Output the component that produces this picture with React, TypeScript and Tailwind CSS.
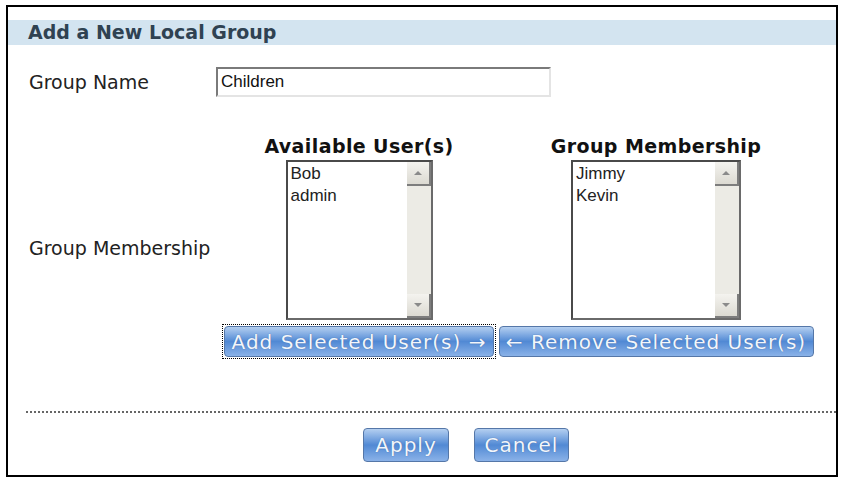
import { ReactNode } from 'react'

const verdana = { fontFamily: '"DejaVu Sans", Verdana, sans-serif' }

function BlueButton({ children, className = '', focused = false }: { children: ReactNode; className?: string; focused?: boolean }) {
  return (
    <div className={focused ? 'border border-dotted border-black p-px' : 'p-[2px]'}>
      <button
        className={`flex items-center justify-center whitespace-nowrap rounded-[4px] border border-[#5577a8] bg-gradient-to-b from-[#b4cff0] via-[#5189d4] to-[#8ab2e8] text-[20px] leading-none tracking-[1px] text-[#f2f6fc] [text-shadow:0_0_1px_#3a5f98] font-['DejaVu_Sans',sans-serif] ${className}`}
      >
        {children}
      </button>
    </div>
  )
}

function ScrollArrow({ down = false }: { down?: boolean }) {
  return (
    <div className="flex h-[24px] w-[24px] items-center justify-center border-r-2 border-b-2 border-[#7d7d7d] bg-gradient-to-b from-[#f4f3ef] to-[#dcdad2]">
      <svg width="10" height="6" viewBox="0 0 10 6">
        {down ? <path d="M1 1 L9 1 L5 5 Z" fill="#8a8a8a" /> : <path d="M1 5 L9 5 L5 1 Z" fill="#8a8a8a" />}
      </svg>
    </div>
  )
}

function ListBox({ items, width }: { items: string[]; width: string }) {
  return (
    <div className={`flex h-[160px] ${width} border-2 border-t-[#4a4a4a] border-l-[#4a4a4a] border-r-[#6a6a6a] border-b-[#6a6a6a] bg-white`}>
      <div className="flex-1 px-[3px] pt-[1px] text-[17px] leading-[22px] text-[#222] font-['Liberation_Sans',Arial,sans-serif]">
        {items.map((item) => (
          <div key={item}>{item}</div>
        ))}
      </div>
      <div className="flex w-[24px] flex-col justify-between bg-[#ecebe5]">
        <ScrollArrow />
        <ScrollArrow down />
      </div>
    </div>
  )
}

export default function App() {
  return (
    <div className="h-[479px] w-[843px] bg-white pl-[6px] pt-[5px]">
      <div className="flex h-[472px] w-[832px] flex-col border-2 border-black" style={verdana}>
        {/* Header */}
        <div className="mt-[13px] flex h-[25px] items-center bg-[#d3e4f0] pl-[20px] text-[19px] font-bold text-[#2f4252]">
          Add a New Local Group
        </div>

        {/* Group name */}
        <div className="mt-[22px] flex items-center">
          <div className="w-[208px] pl-[21px] text-[19px] text-[#222]">Group Name</div>
          <div className="flex h-[30px] w-[335px] items-center border-2 border-t-[#7a7a7a] border-l-[#7a7a7a] border-r-[#e4e4e4] border-b-[#e4e4e4] bg-white px-[3px] text-[17px] text-[#111] font-['Liberation_Sans',Arial,sans-serif]">
            Children
          </div>
        </div>

        {/* Membership */}
        <div className="mt-[38px] flex">
          <div className="flex w-[213px] items-center pl-[21px] pt-[2px] text-[19px] text-[#222]">Group Membership</div>
          <div className="flex w-[276px] flex-col items-center">
            <div className="h-[25px] text-[19px] font-bold leading-[22px] tracking-[0.4px] text-[#111]">Available User(s)</div>
            <ListBox items={['Bob', 'admin']} width="w-[147px]" />
            <div className="mt-[4px]">
              <BlueButton focused className="h-[31px] w-[270px]">Add Selected User(s) →</BlueButton>
            </div>
          </div>
          <div className="flex w-[318px] flex-col items-center">
            <div className="h-[25px] text-[19px] font-bold leading-[22px] tracking-[0.4px] text-[#111]">Group Membership</div>
            <ListBox items={['Jimmy', 'Kevin']} width="w-[170px]" />
            <div className="mt-[4px]">
              <BlueButton className="h-[31px] w-[315px]">← Remove Selected User(s)</BlueButton>
            </div>
          </div>
        </div>

        {/* Separator */}
        <div className="ml-[18px] mt-[52px] border-t-2 border-dotted border-[#666]" />

        {/* Actions */}
        <div className="mt-[13px] flex gap-[21px] pl-[353px]">
          <BlueButton className="h-[34px] w-[86px]">Apply</BlueButton>
          <BlueButton className="h-[34px] w-[95px]">Cancel</BlueButton>
        </div>
      </div>
    </div>
  )
}
